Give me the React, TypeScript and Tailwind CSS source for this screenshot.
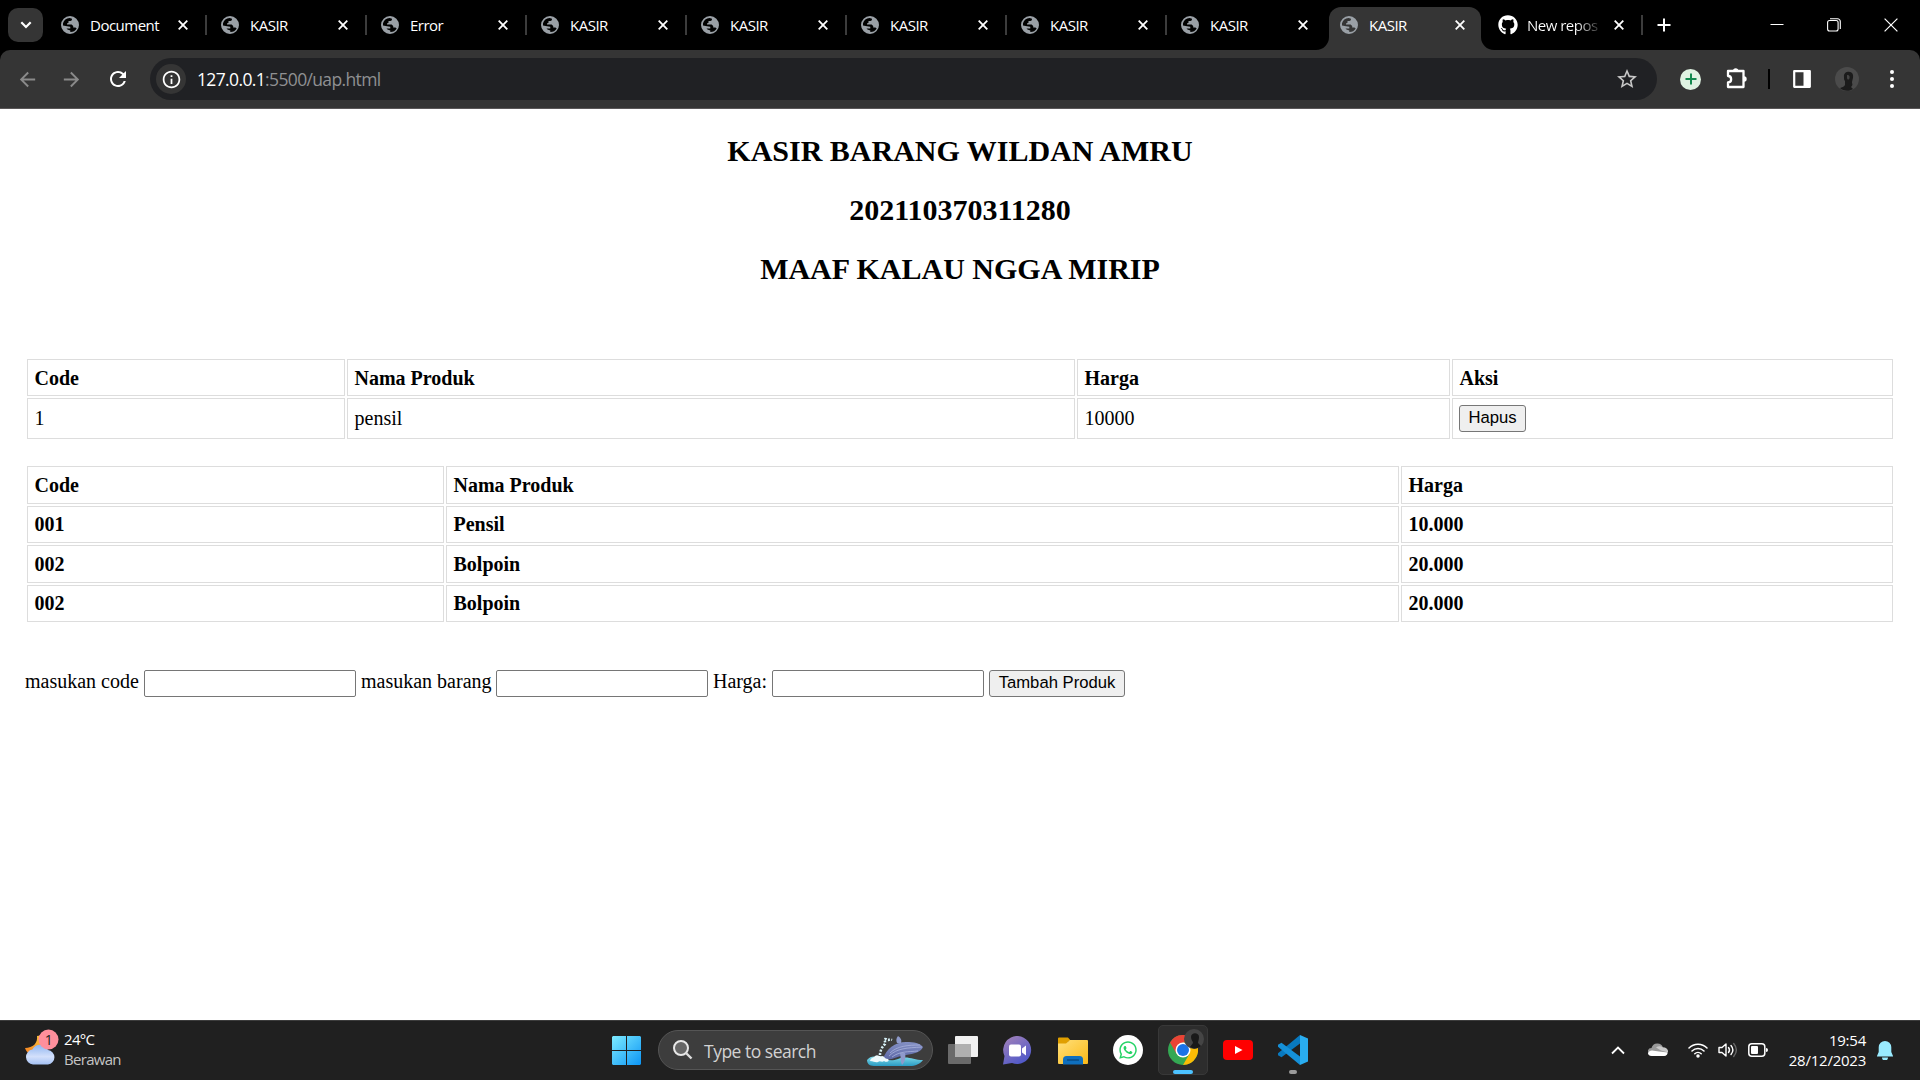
import React from "react";
import { FaGithub, FaWhatsapp } from "react-icons/fa";
import { MdRefresh, MdStarBorder, MdArrowBack, MdArrowForward, MdInfoOutline } from "react-icons/md";

const ui = "font-['Open_Sans','Noto_Sans',sans-serif]";

function Cross({ className = "" }: { className?: string }) {
  return (
    <svg viewBox="0 0 10 10" className={`h-[10px] w-[10px] shrink-0 ${className}`}>
      <path d="M.7 .7 9.3 9.3M9.3 .7 .7 9.3" stroke="#fff" strokeWidth="1.8" />
    </svg>
  );
}

function Globe() {
  return (
    <svg viewBox="0 0 18 18" className="h-[18px] w-[18px] shrink-0">
      <path
        fillRule="evenodd"
        d="M9 0a9 9 0 1 1 0 18A9 9 0 0 1 9 0zM2 7.200C2.800 4.300 5.200 2.200 8.600 2L11 2.700 10.800 4.200 9.500 5H7.500v1.700L6 7.500v.9h4.600l1.600 1.500v1.500l2.200.1 1.300 1.100A7.200 7.200 0 0 1 9.300 16.100V14.400L6.500 13.600 5.500 12.400H9.300V10.700L6 10.300 2 9.500z"
        fill="#9aa0a6"
      />
    </svg>
  );
}

function Tab({ title, divider = true }: { title: string; divider?: boolean }) {
  return (
    <div className="flex h-[50px] w-[160px] shrink-0 items-center">
      <Globe />
      <span className="ml-[11px] w-[87.5px] whitespace-nowrap text-[15px] leading-5 tracking-[-0.5px] text-white">{title}</span>
      <Cross />
      <span className={`ml-[17.5px] h-5 w-[2px] ${divider ? "bg-[#3c3c3c]" : ""}`} />
    </div>
  );
}

function TabStrip() {
  return (
    <div className="flex h-[50px] bg-black">
      <div className="mt-2 ml-2 mr-[18px] flex h-[34px] w-[35px] shrink-0 items-center justify-center rounded-[10px] bg-[#353535]">
        <svg viewBox="0 0 12 8" className="h-2 w-3">
          <path d="M1.3 1.3 6 6l4.700-4.700" fill="none" stroke="#fff" strokeWidth="2.200" />
        </svg>
      </div>
      {["Document", "KASIR", "Error", "KASIR", "KASIR", "KASIR", "KASIR"].map((t, i) => (
        <Tab key={i} title={t} />
      ))}
      <div className="w-[160px] shrink-0">
        <Tab title="KASIR" divider={false} />
      </div>
      <div className="relative -ml-[12px] mt-[7px] flex h-[43px] w-[152px] shrink-0 items-center rounded-t-[12px] bg-[#353535] pb-[7px] pl-[11px]">
        <svg viewBox="0 0 13 13" className="absolute -left-[13px] bottom-0 h-[13px] w-[13px]">
          <path d="M13 0v13H0A13 13 0 0 0 13 0z" fill="#353535" />
        </svg>
        <svg viewBox="0 0 13 13" className="absolute -right-[13px] bottom-0 h-[13px] w-[13px]">
          <path d="M0 0v13h13A13 13 0 0 1 0 0z" fill="#353535" />
        </svg>
        <Globe />
        <span className="ml-[11px] w-[86px] text-[15px] leading-5 tracking-[-0.5px] text-white">KASIR</span>
        <Cross />
      </div>
      <div className="flex h-[50px] w-[193px] shrink-0 items-center pl-[17px]">
        <FaGithub className="h-5 w-5 shrink-0 text-white" />
        <span className="ml-[9px] w-[71px] whitespace-nowrap bg-linear-to-r from-white from-70% to-[#333] bg-clip-text text-[15px] leading-5 tracking-[-0.5px] text-transparent">
          New repos
        </span>
        <Cross className="ml-[16px]" />
        <span className="ml-[17px] h-5 w-[2px] shrink-0 bg-[#3c3c3c]" />
        <svg viewBox="0 0 14 14" className="ml-[14px] h-[14px] w-[14px] shrink-0">
          <path d="M7 .5v13M.5 7h13" stroke="#fff" strokeWidth="2" />
        </svg>
      </div>
      <div className="ml-auto flex h-[50px] items-center pr-[22px]">
        <svg viewBox="0 0 14 14" className="h-[14px] w-[14px]">
          <path d="M.5 6.500h13" stroke="#fff" />
        </svg>
        <svg viewBox="0 0 14 14" className="ml-[43px] h-[14px] w-[14px]">
          <rect x=".6" y="2.500" width="10.500" height="10.500" rx="2" fill="none" stroke="#fff" strokeWidth="1.100" />
          <path d="M3 .8h7.500a2.800 2.800 0 0 1 2.800 2.800V11" fill="none" stroke="#fff" strokeWidth="1.100" />
        </svg>
        <svg viewBox="0 0 14 14" className="ml-[43px] h-[14px] w-[14px]">
          <path d="M.6 .6 13.400 13.400M13.400 .6 .6 13.400" stroke="#fff" strokeWidth="1.200" />
        </svg>
      </div>
    </div>
  );
}

function Toolbar() {
  return (
    <div className="bg-black">
      <div className="flex h-[59px] items-center rounded-t-[10px] border-b border-[#5a5758] bg-[#353535]">
        <MdArrowBack className="ml-[16px] h-[23px] w-[23px] text-[#8a8a8a]" />
        <MdArrowForward className="ml-[21px] h-[23px] w-[23px] text-[#8a8a8a]" />
        <MdRefresh className="ml-[23px] h-[24px] w-[24px] text-white" />
        <div className="ml-5 flex h-[42px] w-[1507px] items-center rounded-full bg-[#202124] pl-[6px]">
          <div className="flex h-[30px] w-[30px] items-center justify-center rounded-full bg-[#353535]">
            <MdInfoOutline className="h-[21px] w-[21px] text-white" />
          </div>
          <span className="ml-[11px] text-[17.5px] leading-6 tracking-[-0.64px] text-[#8f9092]">
            <span className="text-white">127.0.0.1</span>:5500/uap.html
          </span>
          <MdStarBorder className="ml-auto mr-[18px] h-6 w-6 text-[#c7c7c7]" />
        </div>
        <div className="ml-[23px] flex h-[21px] w-[21px] items-center justify-center rounded-full bg-[#dff3e2]">
          <svg viewBox="0 0 12 12" className="h-3 w-3">
            <path d="M6 .5v11M.5 6h11" stroke="#128a4e" strokeWidth="2" />
          </svg>
        </div>
        <svg viewBox="0 0 21 21" className="ml-[25px] -mt-[2px] h-[21px] w-[21px]">
          <path d="M2 3h15.500v16H2v-4.500c4.200 0 4.200-6.500 0-6.500z" fill="none" stroke="#fff" strokeWidth="2.300" strokeLinejoin="round" />
          <path d="M7 3a2.700 2.700 0 0 1 5.400 0zM18 8.300a2.700 2.700 0 0 1 0 5.400z" fill="#fff" />
        </svg>
        <span className="ml-[21px] h-5 w-[2px] bg-black" />
        <svg viewBox="0 0 18 18" className="ml-[23px] h-[18px] w-[18px]">
          <path d="M1.200 1.200h15.600v15.600H1.200z" fill="none" stroke="#fff" strokeWidth="2.200" strokeLinejoin="round" />
          <path d="M10.500 1h6.500v16h-6.500z" fill="#fff" />
        </svg>
        <svg viewBox="0 0 24 24" className="ml-[24px] h-6 w-6">
          <circle cx="12" cy="12" r="12" fill="#4b4b4b" />
          <path d="M9 10c-1-6 8-7 9-2 .5 4-1 5-1 8 1 2 0 3-1 4l2 2c-4 3-10 2-13-1 2-1 4-1 5-3v-4c-1-1-1-2-1-4z" fill="#1b1b1b" />
          <path d="M12 8c2-.5 3 1 2.500 3s-2 2-2.500 0z" fill="#444" />
        </svg>
        <svg viewBox="0 0 6 20" className="ml-[30px] h-5 w-[6px]">
          <circle cx="3" cy="3" r="2" fill="#fff" />
          <circle cx="3" cy="10" r="2" fill="#fff" />
          <circle cx="3" cy="17" r="2" fill="#fff" />
        </svg>
      </div>
    </div>
  );
}

const cell = "flex items-center border border-[#ddd] pl-[6.5px]";
const button =
  "flex h-[27px] items-center justify-center rounded-[3px] border border-[#767676] bg-[#efefef] pb-[2px] font-['Liberation_Sans',sans-serif] text-[16.667px] leading-[19px]";

function Page() {
  return (
    <main className="flex h-[911px] flex-col bg-white font-['Liberation_Serif',serif] text-[20px] leading-[23px] text-black">
      <div className="mt-[12px] flex flex-col items-center text-[30px] font-bold">
        <h2 className="h-[59px] leading-[59px]">KASIR BARANG WILDAN AMRU</h2>
        <h2 className="h-[59px] leading-[59px]">202110370311280</h2>
        <h2 className="h-[59px] leading-[59px]">MAAF KALAU NGGA MIRIP</h2>
      </div>
      <div className="mt-[61px] ml-[27px] grid grid-cols-[318px_728px_373px_441px] grid-rows-[37px_41px] gap-[2px]">
        {["Code", "Nama Produk", "Harga", "Aksi"].map((t) => (
          <div key={t} className={`${cell} pt-px font-bold`}>{t}</div>
        ))}
        <div className={cell}>1</div>
        <div className={cell}>pensil</div>
        <div className={cell}>10000</div>
        <div className="flex items-center border border-[#ddd] pl-[6px]">
          <button className={`${button} w-[67px]`}>Hapus</button>
        </div>
      </div>
      <div className="mt-[27px] ml-[27px] grid grid-cols-[417px_953px_492px] grid-rows-[38px_37px_38px_37px] gap-[2px] font-bold">
        {["Code", "Nama Produk", "Harga", "001", "Pensil", "10.000", "002", "Bolpoin", "20.000", "002", "Bolpoin", "20.000"].map((t, i) => (
          <div key={i} className={cell}>{t}</div>
        ))}
      </div>
      <div className="mt-[48px] ml-[25px] flex h-[27px] items-center whitespace-nowrap">
        <label className="w-[119px] -mt-[4px]">masukan code</label>
        <input className="h-[27px] w-[212px] rounded-[2px] border border-[#767676]" />
        <label className="ml-[5px] w-[135px] -mt-[4px]">masukan barang</label>
        <input className="h-[27px] w-[212px] rounded-[2px] border border-[#767676]" />
        <label className="ml-[5px] w-[59px] -mt-[4px]">Harga:</label>
        <input className="h-[27px] w-[212px] rounded-[2px] border border-[#767676]" />
        <button className={`${button} ml-[5px] w-[136px]`}>Tambah Produk</button>
      </div>
    </main>
  );
}

function Weather() {
  return (
    <div className="flex w-[612px] items-center">
      <svg viewBox="0 0 36 38" className="-mt-[5px] ml-[23px] h-[38px] w-[36px]">
        <defs>
          <linearGradient id="moon" x1="0" y1="1" x2="1" y2="0">
            <stop offset="0" stopColor="#f57c1f" />
            <stop offset="1" stopColor="#ffcf3f" />
          </linearGradient>
          <linearGradient id="cloud" x1="0" y1="0" x2="0" y2="1">
            <stop offset="0" stopColor="#8fb5f0" />
            <stop offset=".6" stopColor="#d3e0fb" />
            <stop offset="1" stopColor="#a5c2f4" />
          </linearGradient>
        </defs>
        <path d="M14 7c1 7-4 12-12 12 2 6 8 9 14 7s9-8 7-14-5-6-9-5z" fill="url(#moon)" />
        <path d="M10 35.500a7.500 7.500 0 0 1-.6-14.900A8.500 8.500 0 0 1 25 21 7.300 7.300 0 0 1 25 35.500z" fill="url(#cloud)" />
        <circle cx="25.500" cy="10.500" r="10" fill="#ff8f9c" />
        <text x="25.800" y="15.500" textAnchor="middle" fontSize="14" fill="#222" fontFamily="Open Sans">1</text>
      </svg>
      <div className="-mt-[2px] ml-[5px] text-[15px] leading-5 tracking-[-0.7px] text-white">
        <div>24°C</div>
        <div className="text-[#c4c4c4]">Berawan</div>
      </div>
    </div>
  );
}

function Whale() {
  return (
    <svg viewBox="0 0 58 32" className="h-8 w-[58px]">
      <defs>
        <linearGradient id="sea" x1="0" y1="0" x2="0" y2="1">
          <stop offset="0" stopColor="#7fdcea" />
          <stop offset="1" stopColor="#2b9cc4" />
        </linearGradient>
        <linearGradient id="whale" x1="0" y1="0" x2="0" y2="1">
          <stop offset="0" stopColor="#8490c4" />
          <stop offset="1" stopColor="#5c68a6" />
        </linearGradient>
      </defs>
      <path d="M1 25c3-4 7-4 11-3 7 2 12 5 20 2 9-4 15 1 25 1-3 4-8 6-13 6H8c-5 0-7-3-7-6z" fill="url(#sea)" />
      <path d="M17 24C20 14 29 7 40 7c8 0 14 1 17 5-2 5-9 7-17 8-9 1-14 6-23 4z" fill="url(#whale)" />
      <path d="M32 1c3 2 4 4 3 7h-4c-1-2-1-5 1-7z" fill="#8e9acb" />
      <path d="M34 18c1 4 0 8 2 12 3-3 4-8 3-12z" fill="#8e9acb" />
      <path d="M23 21c8-8 18-8 33-9M26 22c8-6 16-5 26-6M24 18c7-7 18-8 30-8" fill="none" stroke="#aab3dc" strokeWidth=".8" />
      <path d="M4 26c1-4 4-3 5-5 3-2 4 1 7 0 3 0 2 3 6 3 2 2-1 4-4 2-2 2-4-1-6 1-3 1-4-1-8-1z" fill="#eefafd" />
      <path d="M14 20c0-4 2-8 5-11 1-3-2-5 0-5s2 1 3 1 2-1 4 0" fill="none" stroke="#d7f1f7" strokeWidth="2.500" strokeDasharray="2 1.500" />
    </svg>
  );
}

function Apps() {
  return (
    <>
      <svg viewBox="0 0 29 29" className="h-[29px] w-[29px]">
        <defs>
          <linearGradient id="win" x1="0" y1="0" x2="1" y2="1">
            <stop offset="0" stopColor="#7debff" />
            <stop offset="1" stopColor="#0c95f5" />
          </linearGradient>
        </defs>
        <path d="M1 0h13v14H0V1zM15 0h13l1 1v13H15zM0 15h14v14H1l-1-1zM15 15h14v13l-1 1H15z" fill="url(#win)" />
      </svg>
      <div className="ml-[17px] flex h-10 w-[275px] items-center rounded-full border border-[#555] bg-[#3d3d3d]">
        <svg viewBox="0 0 20 20" className="ml-[14px] h-5 w-5">
          <circle cx="8" cy="8" r="7" fill="#666" stroke="#e8e8e8" strokeWidth="2" />
          <path d="m13 13 5.500 5.500" stroke="#ddd" strokeWidth="2.400" />
        </svg>
        <span className="ml-[11px] mt-[2px] text-[17.5px] leading-6 tracking-[-0.5px] text-[#d2d2d2]">Type to search</span>
        <div className="ml-auto mr-[8px] mt-[2px]"><Whale /></div>
      </div>
      <svg viewBox="0 0 30 28" className="ml-[15px] h-7 w-[30px]">
        <rect x="0" y="8" width="23" height="20" rx="1" fill="#6a6a6a" />
        <rect x="7" y="0" width="23" height="21" rx="1" fill="#f1f1f1" />
        <path d="M7 8h16v13H7z" fill="#b0b0b0" />
      </svg>
      <svg viewBox="0 0 29 29" className="ml-[25px] h-[29px] w-[29px]">
        <defs>
          <linearGradient id="chat" x1="0" y1="0" x2=".6" y2="1">
            <stop offset="0" stopColor="#a683b8" />
            <stop offset="1" stopColor="#5059c9" />
          </linearGradient>
        </defs>
        <path d="M15 0a14 14 0 1 1-6 27L0 28.500 1.500 20A14 14 0 0 1 15 0z" fill="url(#chat)" />
        <rect x="6" y="8.500" width="12" height="12" rx="2" fill="#fff" />
        <path d="m19 12.500 4-3v10l-4-3z" fill="#fff" />
      </svg>
      <svg viewBox="0 0 30 28" className="ml-[26px] mt-px h-7 w-[30px]">
        <defs>
          <linearGradient id="folder" x1="0" y1="0" x2="1" y2="1">
            <stop offset="0" stopColor="#ffe07a" />
            <stop offset="1" stopColor="#fbb917" />
          </linearGradient>
        </defs>
        <path d="M0 1.500Q0 .5 1 .5h9l3 3.500h-2L8 8H0z" fill="#e09f00" />
        <path d="M0 6.500h8L12 3h17q1 0 1 1v22q0 1-1 1H1q-1 0-1-1z" fill="url(#folder)" />
        <path d="M5 27.500v-5Q5 19 8.500 19h13q3.500 0 3.500 3.500v5z" fill="#0f6fbe" />
        <path d="M9 23h12" stroke="#084b86" strokeWidth="1.500" />
      </svg>
      <div className="ml-[25px] flex h-[30px] w-[30px] items-center justify-center rounded-full bg-white">
        <FaWhatsapp className="h-[20px] w-[20px] text-[#25d366]" />
      </div>
      <div className="relative ml-[15px] flex h-[50px] w-[50px] justify-center rounded-[5px] border border-[#383838] bg-[#2d2d2d]">
        <svg viewBox="0 0 48 48" className="mt-[9px] h-[30px] w-[30px]">
          <circle cx="24" cy="24" r="24" fill="#34a853" />
          <path d="M3.200 12A24 24 0 0 1 44.800 12L24 12 13.600 30z" fill="#ea4335" />
          <path d="M44.800 12A24 24 0 0 1 24 48L34.400 30 24 12z" fill="#fbbc05" />
          <circle cx="24" cy="24" r="12" fill="#fff" />
          <circle cx="24" cy="24" r="9.600" fill="#1a73e8" />
        </svg>
        <svg viewBox="0 0 20 20" className="absolute left-[25px] top-[3px] h-5 w-5">
          <circle cx="10" cy="10" r="10" fill="#454545" />
          <path d="M7 8c0-5 8-5 8 0 0 3-1 4-1 6l3 3c-3 3-8 3-11 1l3-4c0-2-2-3-2-6z" fill="#191919" />
        </svg>
        <span className="absolute bottom-0 left-[14px] h-1 w-5 rounded-full bg-[#4cc2ff]" />
      </div>
      <svg viewBox="0 0 30 20" className="ml-[15px] h-5 w-[30px]">
        <rect width="30" height="20" rx="4" fill="#f00" />
        <path d="m12 6 7.500 4L12 14z" fill="#fff" />
      </svg>
      <div className="relative ml-[25px] flex h-[50px] items-center">
        <svg viewBox="0 0 30 30" className="h-[30px] w-[30px]">
          <path d="M22 0v8.500L3.500 22.300 0 20.200v-2z" fill="#0879bf" />
          <path d="M22 30v-8.500L3.500 7.700 0 9.800v2z" fill="#1590d8" />
          <path d="m22 0 8 3.500v23L22 30z" fill="#29adf0" />
        </svg>
        <span className="absolute bottom-px left-[11px] h-1 w-2 rounded-full bg-[#9a9a9a]" />
      </div>
    </>
  );
}

function Tray() {
  return (
    <div className="ml-auto flex items-center pr-[27px]">
      <svg viewBox="0 0 14 9" className="h-[9px] w-[14px]">
        <path d="m1 7.500 6-6 6 6" fill="none" stroke="#fff" strokeWidth="1.800" />
      </svg>
      <svg viewBox="0 0 20 14" className="ml-[23px] h-[14px] w-5">
        <path d="M4 13a4 4 0 0 1-.5-8A6 6 0 0 1 15 4.500a4.300 4.300 0 0 1 1 8.500z" fill="#999" />
        <path d="M8 4.500A6 6 0 0 1 15 4.500a4.300 4.300 0 0 1 5 5l-7-2z" fill="#c9c9c9" />
        <path d="M0 10.500Q1 7.500 4 7.500l7 1 8.500 1c.3 2-1.500 3.500-3.500 3.500H4c-2 0-3.500-1-4-2.500z" fill="#fff" />
      </svg>
      <svg viewBox="0 0 20 16" className="ml-5 h-4 w-5" fill="none" stroke="#fff" strokeWidth="1.500" strokeLinecap="round">
        <path d="M1 6a12.500 12.500 0 0 1 18 0M4 9a8.500 8.500 0 0 1 12 0M6.800 11.700a4.600 4.600 0 0 1 6.400 0" />
        <circle cx="10" cy="14" r="1" fill="#fff" />
      </svg>
      <svg viewBox="0 0 20 16" className="ml-[10px] h-4 w-5" fill="none" stroke="#fff" strokeWidth="1.400" strokeLinecap="round" strokeLinejoin="round">
        <path d="M1 5.500h3L8 2v12l-4-3.500H1z" />
        <path d="M10.500 5.500q2 2.500 0 5M13 3.500q3.800 4.500 0 9" />
        <path d="M15.700 1.500q5.400 6.500 0 13" stroke="#666" />
      </svg>
      <svg viewBox="0 0 20 14" className="ml-[10px] h-[14px] w-5">
        <rect x=".8" y=".8" width="16" height="12.400" rx="3" fill="none" stroke="#fff" strokeWidth="1.500" />
        <rect x="3" y="3" width="7" height="8" rx="1" fill="#fff" />
        <path d="M18 5q2 0 2 2t-2 2z" fill="#fff" />
      </svg>
      <div className="-mt-px ml-[18px] w-[80px] text-right text-[15px] leading-5 tracking-[-0.24px] text-white">
        <div>19:54</div>
        <div>28/12/2023</div>
      </div>
      <svg viewBox="0 0 16 19" className="ml-[11px] mt-px h-[19px] w-4">
        <path d="M8 0a6.300 6.300 0 0 1 6.300 6.300V11l1.700 4v.5H0V15l1.700-4V6.300A6.300 6.300 0 0 1 8 0zM5 16.500h6a3 3 0 0 1-6 0z" fill="#99ebff" />
      </svg>
    </div>
  );
}

export default function App() {
  return (
    <div className={`flex h-[1080px] w-[1920px] flex-col overflow-hidden ${ui}`}>
      <TabStrip />
      <Toolbar />
      <Page />
      <footer className="flex h-[60px] items-center border-t border-[#3c3c3c] bg-[#202020] pb-px">
        <Weather />
        <Apps />
        <Tray />
      </footer>
    </div>
  );
}
